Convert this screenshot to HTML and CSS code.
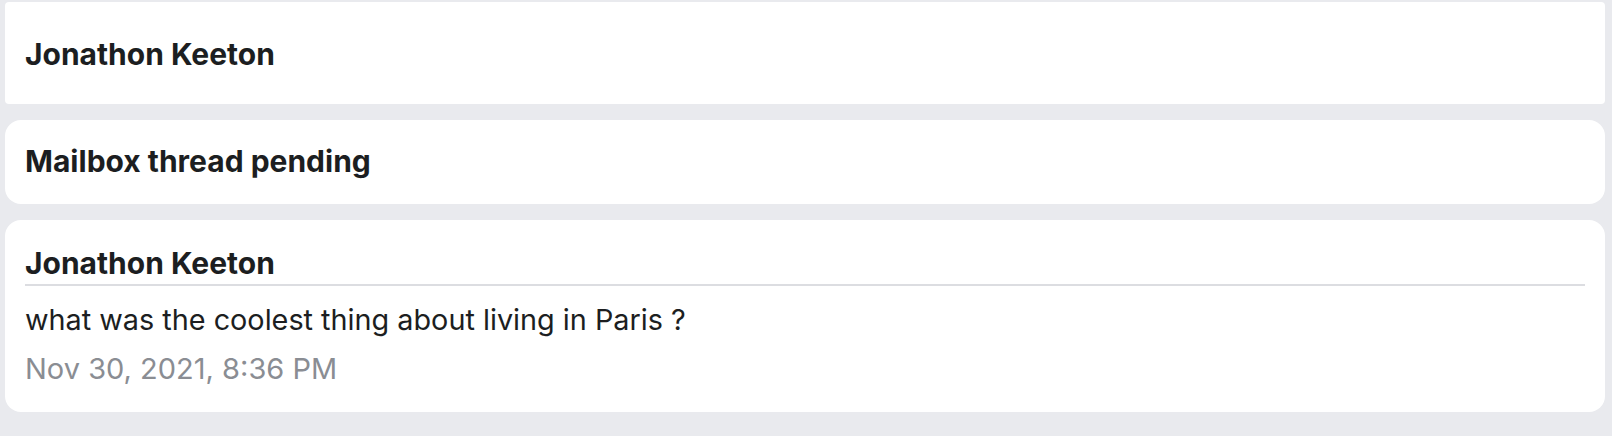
FILE: index.html
```html
<!DOCTYPE html>
<html lang="en">
<head>
<meta charset="utf-8">
<title>Mailbox thread</title>
<link rel="stylesheet" href="styles.css">
</head>
<body>
  <main class="thread">
    <section class="card card--header">
      <h2 class="card__title">Jonathon Keeton</h2>
    </section>
    <section class="card card--status">
      <h2 class="card__title">Mailbox thread pending</h2>
    </section>
    <article class="card card--message">
      <h2 class="card__title card__title--ruled">Jonathon Keeton</h2>
      <p class="message__body">what was the coolest thing about living in Paris ?</p>
      <p class="message__time">Nov 30, 2021, 8:36 PM</p>
    </article>
  </main>
</body>
</html>
```

FILE: styles.css
```css
html, body {
  margin: 0;
  padding: 0;
  background: #e9eaee;
}

body {
  font-family: Inter, "Noto Sans", "Liberation Sans", sans-serif;
  color: #1c1e21;
}

.thread {
  display: flex;
  flex-direction: column;
  gap: 16px;
  padding: 2px 7px 24px 5px;
}

.card {
  background: #ffffff;
  border-radius: 16px;
  padding: 22px 20px;
}

.card--header {
  border-radius: 4px;
  padding: 33px 20px 30px;
}

.card--status {
  padding: 22px 20px 23px;
}

.card--message {
  padding: 24px 20px 23px;
}

.card__title {
  margin: 0;
  font-size: 30px;
  line-height: 39px;
  font-weight: 700;
}

.card__title--ruled {
  padding-bottom: 1px;
  border-bottom: 2px solid #dcdde1;
}

.message__body {
  margin: 14px 0 0;
  font-size: 28.8px;
  line-height: 40px;
  font-weight: 400;
}

.message__time {
  margin: 9px 0 0;
  font-size: 29px;
  line-height: 40px;
  color: #8a8d93;
}
```
